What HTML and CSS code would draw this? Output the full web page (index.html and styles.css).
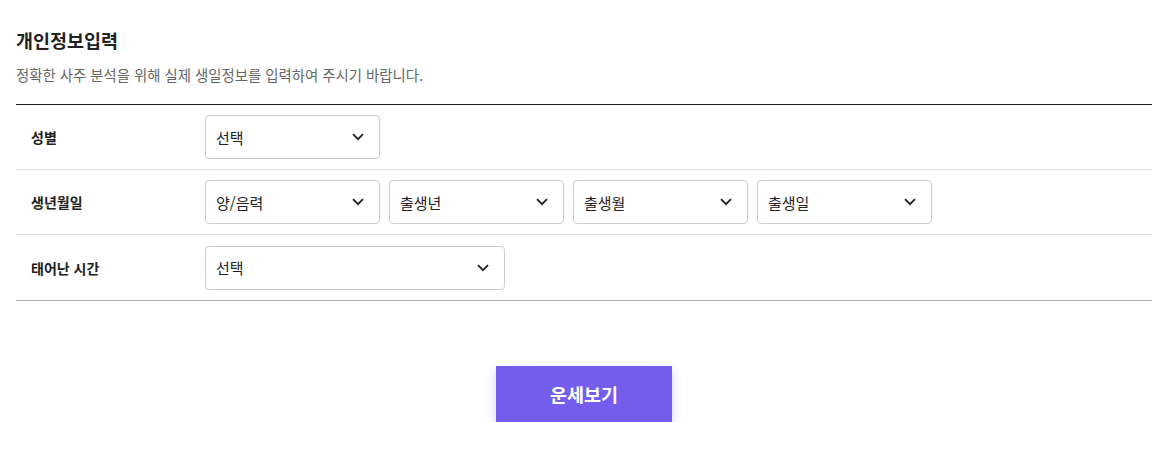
FILE: index.html
```html
<!DOCTYPE html>
<html lang="ko">
<head>
<meta charset="utf-8">
<link rel="stylesheet" href="styles.css">
</head>
<body>
<div class="wrap">
  <h2 class="title">개인정보입력</h2>
  <p class="desc">정확한 사주 분석을 위해 실제 생일정보를 입력하여 주시기 바랍니다.</p>
  <div class="table">
    <div class="row">
      <div class="label">성별</div>
      <div class="fields">
        <div class="select"><span>선택</span><svg class="chev" viewBox="0 0 12 8"><path d="M1 1.2 6 6.2 11 1.2"/></svg></div>
      </div>
    </div>
    <div class="row">
      <div class="label">생년월일</div>
      <div class="fields">
        <div class="select"><span>양/음력</span><svg class="chev" viewBox="0 0 12 8"><path d="M1 1.2 6 6.2 11 1.2"/></svg></div>
        <div class="select"><span>출생년</span><svg class="chev" viewBox="0 0 12 8"><path d="M1 1.2 6 6.2 11 1.2"/></svg></div>
        <div class="select"><span>출생월</span><svg class="chev" viewBox="0 0 12 8"><path d="M1 1.2 6 6.2 11 1.2"/></svg></div>
        <div class="select"><span>출생일</span><svg class="chev" viewBox="0 0 12 8"><path d="M1 1.2 6 6.2 11 1.2"/></svg></div>
      </div>
    </div>
    <div class="row last">
      <div class="label">태어난 시간</div>
      <div class="fields">
        <div class="select wide"><span>선택</span><svg class="chev" viewBox="0 0 12 8"><path d="M1 1.2 6 6.2 11 1.2"/></svg></div>
      </div>
    </div>
  </div>
  <div class="actions">
    <button class="btn">운세보기</button>
  </div>
</div>
</body>
</html>
```
FILE: styles.css
```css
* { box-sizing: border-box; }
html, body { margin: 0; padding: 0; background: #fff; }
body {
  font-family: "Noto Sans CJK KR", "Noto Sans", sans-serif;
  color: #222;
}
.wrap {
  width: 1136px;
  margin-left: 16px;
  padding-top: 27px;
}
.title {
  margin: 0;
  font-size: 18.5px;
  font-weight: 700;
  line-height: 26px;
  color: #222;
}
.desc {
  margin: 12px 0 0;
  font-size: 14.4px;
  line-height: 20px;
  color: #666;
}
.table {
  margin-top: 19px;
  border-top: 1px solid #222;
  border-bottom: 1px solid #aaa;
}
.row {
  display: flex;
  align-items: center;
  padding: 10px 0;
  border-bottom: 1px solid #ddd;
  min-height: 65px;
}
.row.last { border-bottom: 0; }
.label {
  width: 189px;
  padding-left: 15px;
  font-size: 14px;
  font-weight: 700;
  color: #222;
}
.fields {
  display: flex;
  gap: 9px;
}
.select {
  width: 175px;
  height: 44px;
  border: 1px solid #ccc;
  border-radius: 4px;
  display: flex;
  align-items: center;
  justify-content: space-between;
  padding: 0 15px 0 10px;
  font-size: 15px;
  color: #222;
  background: #fff;
}
.select.wide { width: 300px; }
.chev {
  width: 12px;
  height: 8px;
  fill: none;
  stroke: #222;
  stroke-width: 1.8;
}
.actions {
  display: flex;
  justify-content: center;
  padding-top: 65px;
}
.btn {
  width: 176px;
  height: 56px;
  border: 0;
  background: #745ded;
  color: #fff;
  font-family: inherit;
  font-size: 18.5px;
  font-weight: 700;
  box-shadow: 0 4px 10px rgba(116, 93, 237, 0.3);
}
```
